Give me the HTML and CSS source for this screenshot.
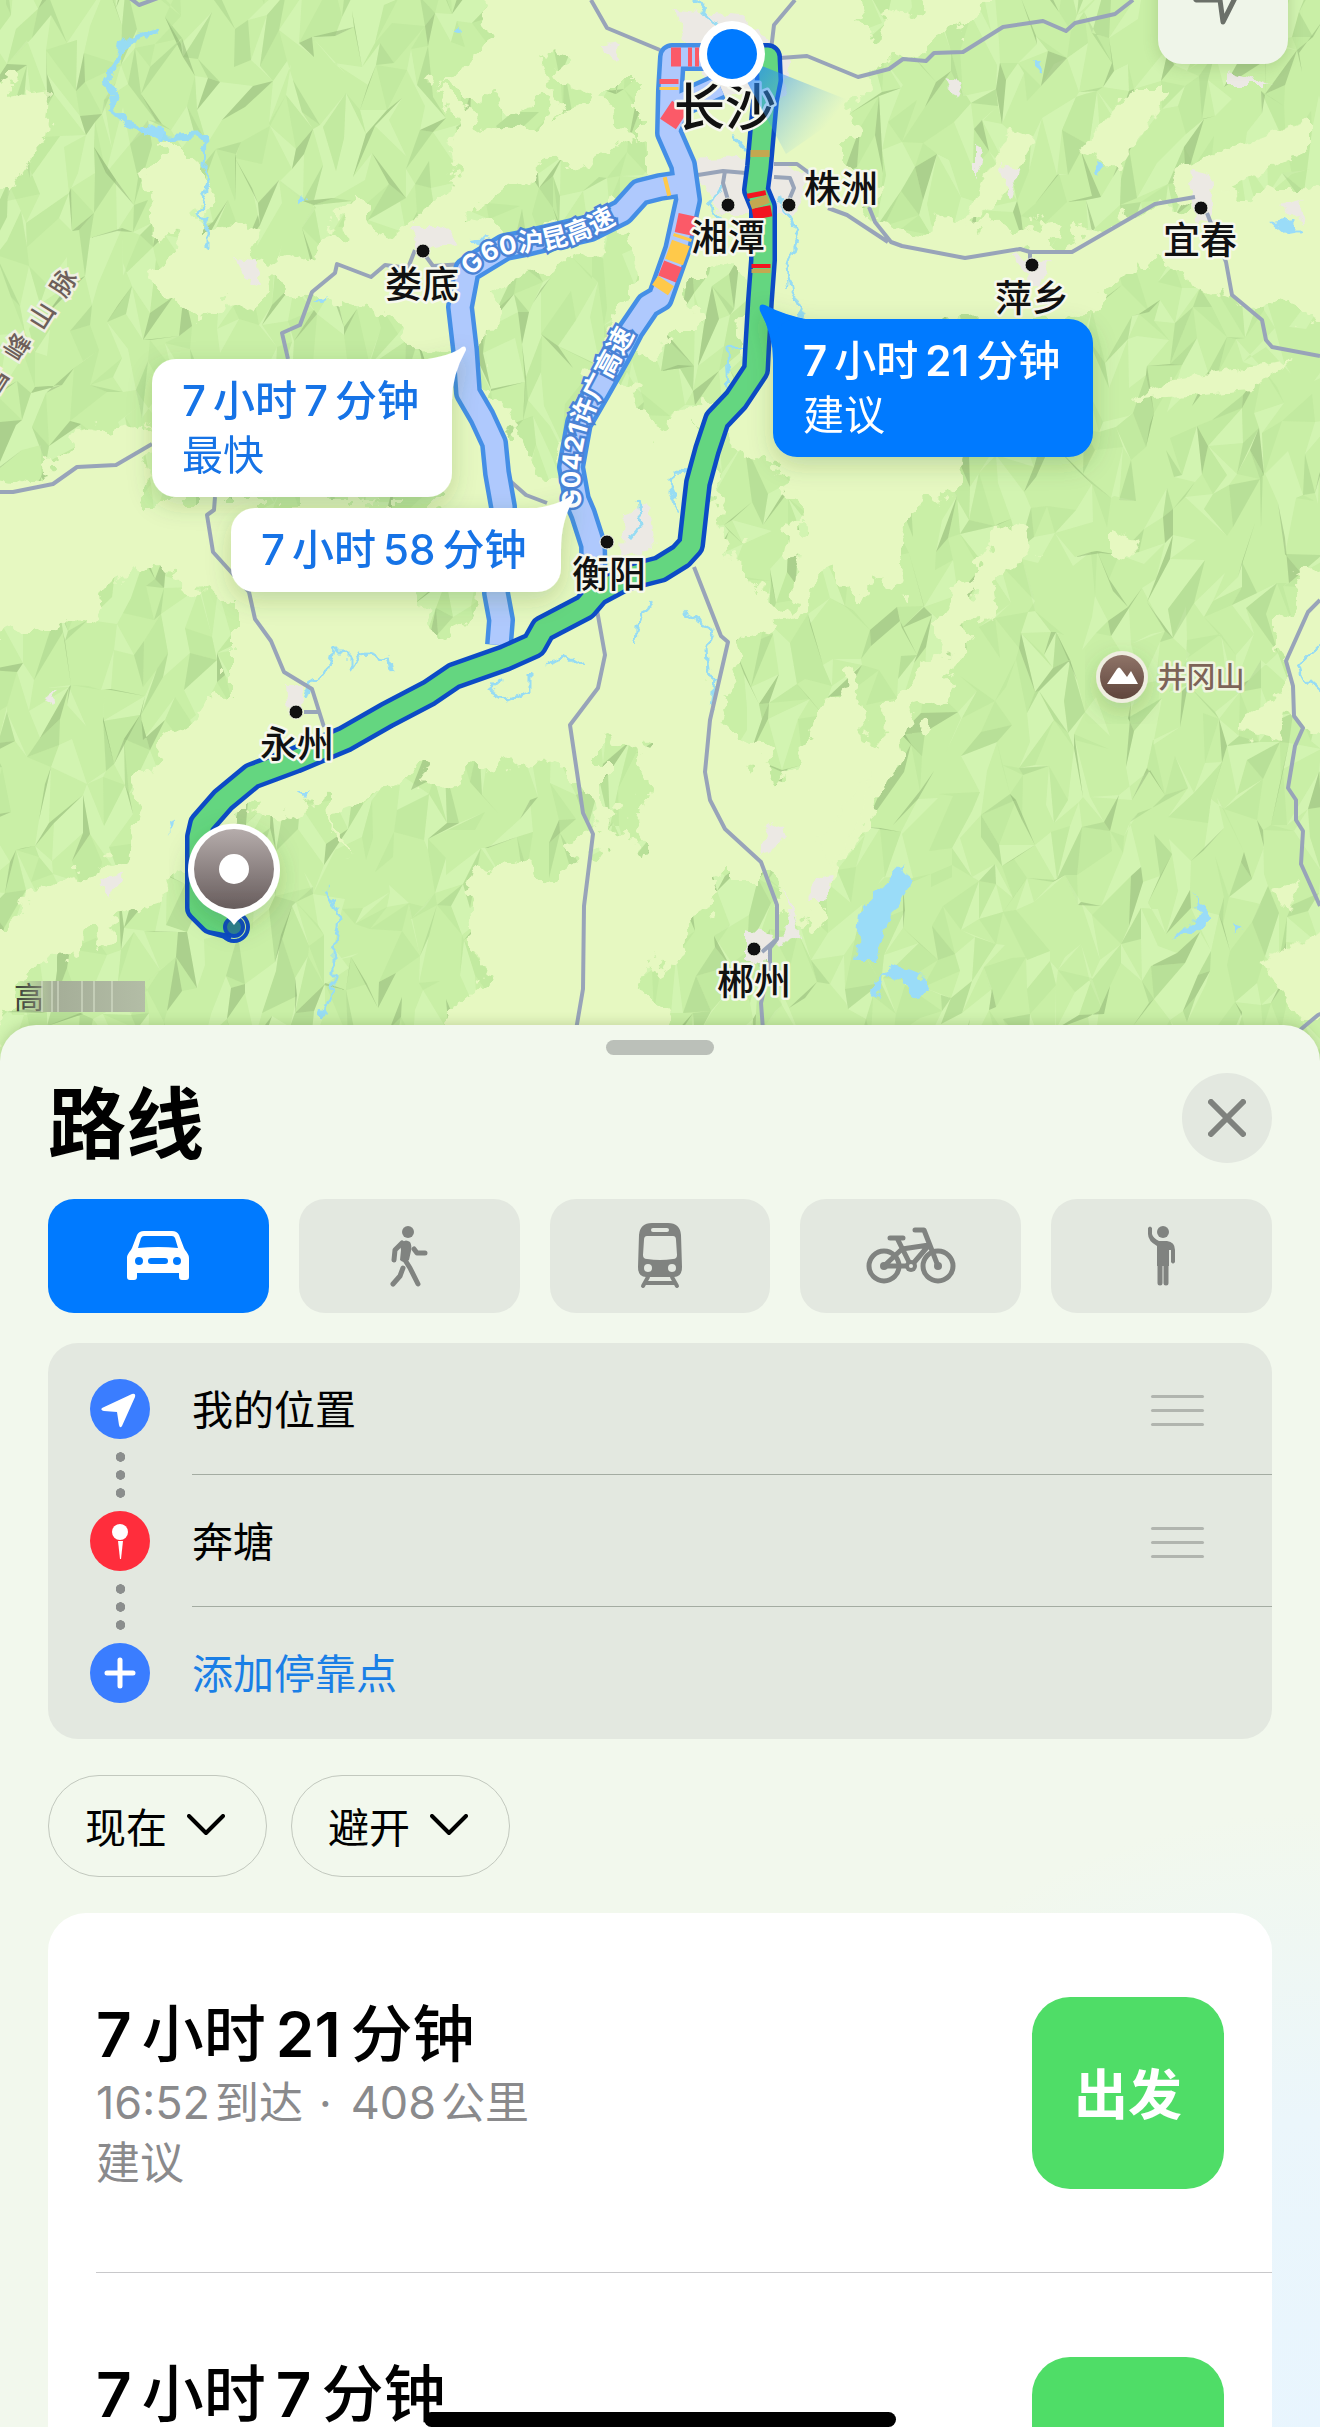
FILE: index.html
```html
<!DOCTYPE html>
<html lang="zh-CN">
<head>
<meta charset="utf-8">
<meta name="viewport" content="width=device-width, initial-scale=1">
<title>路线</title>
<link rel="stylesheet" href="styles.css">
</head>
<body>
<div class="app">
  <section class="map" aria-label="地图">
    <svg class="map-canvas" viewBox="0 0 1320 1065">
      <defs>
        <filter id="coast" x="-40" y="-40" width="1400" height="1145" filterUnits="userSpaceOnUse" color-interpolation-filters="sRGB">
          <feTurbulence type="fractalNoise" baseFrequency="0.03" numOctaves="4" seed="4" result="edge"/>
          <feDisplacementMap in="SourceGraphic" in2="edge" scale="64" xChannelSelector="R" yChannelSelector="G"/>
        </filter>
        <filter id="rough" x="0" y="0" width="1320" height="1065" filterUnits="userSpaceOnUse">
          <feTurbulence type="fractalNoise" baseFrequency="0.09" numOctaves="2" seed="7" result="edge"/>
          <feDisplacementMap in="SourceGraphic" in2="edge" scale="14" xChannelSelector="R" yChannelSelector="G"/>
        </filter>
        <filter id="shadow" x="-20%" y="-20%" width="140%" height="160%">
          <feDropShadow dx="0" dy="8" stdDeviation="12" flood-color="#3a5a20" flood-opacity="0.22"/>
        </filter>
        <linearGradient id="pinFill" x1="0" y1="0" x2="0" y2="1"><stop offset="0" stop-color="#b5acab"/><stop offset="1" stop-color="#675c5c"/></linearGradient>
        <linearGradient id="peakFill" x1="0" y1="0" x2="0" y2="1"><stop offset="0" stop-color="#8f7468"/><stop offset="1" stop-color="#5f453c"/></linearGradient>
        <linearGradient id="beam" gradientUnits="userSpaceOnUse" x1="745" y1="66" x2="825" y2="128"><stop offset="0" stop-color="#1a7fff" stop-opacity="0.75"/><stop offset="1" stop-color="#62b8e8" stop-opacity="0"/></linearGradient>
        <linearGradient id="smear"><stop offset="0" stop-color="#8d9480" stop-opacity="0"/><stop offset="0.3" stop-color="#a5ae98"/><stop offset="1" stop-color="#b3bda6"/></linearGradient>
        <path id="g60" d="M472 277 C486 258 508 252 536 251 Q586 244 628 215 L664 196"/>
        <path id="g0421" d="M582 508 C574 440 594 410 614 372 L650 305"/>
        <mask id="woods" maskUnits="userSpaceOnUse" x="0" y="0" width="1320" height="1065">
          <g filter="url(#coast)" fill="#fff">
            <path d="M-40 -40H500L480 50 440 95 460 160 430 215 390 235 350 190 330 240 270 270 240 210 205 240 200 150 150 150 165 230 160 290 195 330 170 380 140 420 80 430 40 480 -40 470V180L30 150 45 100-40 90Z"/>
            <path d="M430 90 550 105 540 130 480 120ZM480 195 610 150 650 135V190L610 215 530 235 470 215ZM540 60 590 80 560 120ZM600 90 640 90 640 140 610 120Z"/>
            <path d="M190 320 270 290 380 310 440 350V500H150L140 430Z"/>
            <path d="M490 290 630 235 640 265 590 370 555 490 515 440 485 380Z"/>
            <path d="M620 370 680 330 730 330 720 390 660 430ZM690 290 740 260 745 400 700 400Z"/>
            <path d="M850 -40H940L900 20 860 30ZM860 90 900 50 960 30 1010-40H1400V170L1250 190 1160 210 1070 240 1010 220 940 230 890 220 850 170Z"/>
            <path d="M940 330 1050 320 1110 300 1150 260 1240 300 1400 360V560L1300 570 1280 640 1270 720 1400 730V1120H700L650 1000 720 880 770 880 800 930 860 840 900 760 940 700 960 640 1030 550 1000 520 960 600 900 690 860 740 850 660 830 690 800 770 750 760 720 700 750 640 800 620 830 560 850 600 900 590 910 530 960 470Z"/>
            <path d="M700 430 790 470 800 530 790 620 760 590 720 530Z"/>
            <path d="M340 810 420 780 480 760 560 770 600 830 570 870 500 860 470 880 480 940 430 1120H350L330 930Z"/>
            <path d="M-40 640 80 620 140 560 230 600 230 700 170 720 140 790 120 860 40 890-40 960Z"/>
            <path d="M240 820 330 800 340 880 400 960 330 1120H-40L20 980 130 920 200 870Z"/>
            <path d="M380 500 480 530 480 600 440 640 400 580ZM600 740 650 760 640 850 600 800ZM1080 600 1220 560 1240 700 1130 740Z"/>
          </g>
        </mask>
      </defs>

      <rect width="1320" height="1065" fill="#e6f8c1"/>

      <!-- wooded hills, with facets drawn by terrain.js -->
      <g mask="url(#woods)">
        <rect width="1320" height="1065" fill="#c9efa6"/>
        <g id="facets"></g>
      </g>
      <!-- valleys crossing the eastern hills -->
      <g filter="url(#rough)" fill="#e6f8c1">
        <path d="M-10 100 50 90 45 140 10 190H-10ZM960 230 975 200 1010 130 1035 140 1000 200ZM1080 150 1130 90 1170 90 1120 170ZM1170 170 1310 120V150L1180 210ZM1130 400 1170 380 1290 360 1250 390ZM1110 530 1140 540 1130 560 1110 555ZM1240 720 1290 690 1280 740 1240 730ZM1270 890 1300 880 1290 910ZM820 840 870 770 860 820 830 870ZM1260 960 1330 930V1020H1300Z"/>
      </g>
      <!-- built-up areas -->
      <g filter="url(#rough)" fill="#ece9e4">
        <path d="M675 10 740 15 790 60 785 100 720 95 690 50ZM410 225 440 225 460 245 420 250ZM235 258 255 260 262 285 245 278ZM1000 165 1020 170 1010 200ZM975 145 985 148 975 180ZM945 78 962 82 955 98ZM600 45 620 42 615 62ZM285 685 305 685 300 720 288 710ZM625 515 650 505 655 550 620 555ZM690 160 770 155 810 180 795 215 720 215ZM1010 255 1050 260 1040 290ZM1190 170 1210 175 1215 225 1195 220ZM745 930 775 935 765 965 745 960ZM815 880 835 875 825 900 808 900ZM770 820 785 830 775 850 760 855ZM785 885 790 925 775 945 800 935ZM1270 85 1225 70 1225 85ZM1280 205 1300 200 1305 225ZM190 460 215 470 195 475ZM45 700 60 690 50 705ZM100 880 125 870 110 900Z"/>
      </g>

      <g class="water" filter="url(#rough)">
        <path class="river river-wide" d="M158 30 122 44 115 68 105 80 115 92 110 108 130 124 148 132 170 137 205 135"/>
        <path class="river" d="M205 135 204 168 209 182 199 215 208 232 208 246M692-5 718 27M733 135 750 155M776 195 790 217 797 238 787 267 792 293 805 317M748 347 727 350 729 393M689 473 672 472 670 490 679 512M306 700 312 681 328 671 333 650 350 650 350 671 362 653 379 659 388 657 391 671M530 671 530 691 508 700 489 690 504 678M544 664 568 657 585 667M638 500 641 526 630 540M651 598 637 629 636 643M686 612 713 629 706 647 708 671 715 681 712 709M326 888 340 919 334 950 334 984 320 1018M1324 640 1298 664 1301 674 1324 695M725 180 710 205 722 222"/>
        <path class="lake" d="M902 865 912 882 888 925 875 962 855 962 860 915 880 889ZM890 965 908 970 920 975 930 993 912 998 902 980 885 975 877 998 872 990ZM1194 891 1210 918 1192 934 1172 938 1185 926 1200 915ZM140 124 165 128 165 140 145 138ZM1270 222 1290 220 1302 232 1285 235ZM468 238 490 236 480 247ZM315 302 330 295 322 306ZM298 195 306 198 300 206ZM1095 162 1106 165 1098 175ZM1035 60 1045 62 1040 70ZM1232 925 1245 928 1235 934ZM168 818 174 820 170 835ZM298 790 308 790 302 796ZM454 30 460 28 458 36Z"/>
      </g>

      <g class="road">
        <path d="M780 58 807 56 858 77 889 69 903 59 926 61 934 53 963 52 1003 27 1043 21 1066 31 1075 23 1115 14 1133 0M795 0 774 25 771 50M591 0 607 28 660 50M130-2 139 5 158-2"/>
        <path d="M463 264 433 266 425 255M415 250 408 268 385 265 371 277 337 264 335 273 312 292 300 325 282 333 288 359M0 492H13L53 484 77 467 116 465 152 444M215 497 214 510 207 515 213 552 231 572 249 592 255 619 271 641 284 672 312 689 324 727M304 712H320M509 480 526 495 547 503"/>
        <path d="M597 610 605 655 598 688 570 725 583 813 593 834 584 906 583 989 576 1030M694 567 721 636 728 642 710 720 705 772 710 800 725 829 761 862 777 905V939L770 948V965L761 1003 763 1030M777 939 762 952"/>
        <path d="M1320 600 1308 612 1286 661 1293 686 1294 716 1303 728 1295 746 1288 788 1296 800V820L1303 831 1301 864 1320 906M1330 1010 1318 1015 1300 1030"/>
        <path d="M698 175 723 171 746 173M725 171 723 183 728 200M774 164H797L812 175M774 177 790 178 794 188 789 200M828 208 847 215 888 242M869 207 875 222 891 242 902 246 965 258 1020 249 1030 252H1072L1155 204 1195 197M1030 252V262M1207 213 1226 262 1232 295 1262 320 1266 340 1272 347 1320 356"/>
      </g>

      <!-- alternative routes -->
      <g class="alt-line">
        <path id="fast" d="M687 183 660 187 640 192 622 212 590 228 526 243 505 247 467 270 460 307 465 350 468 393 482 417 494 443 497 473 503 507 496 593 501 620 499 645"/>
        <path id="slow" d="M732 57H672L670 90 669 133 683 165 688 200 677 250 660 298 648 305 631 330 619 353 598 390 579 423 571 467 577 500 583 514 593 545 594 595"/>
        <path id="ramp" d="M669 128 682 103 720 86"/>
      </g>
      <g class="alt-fill"><use href="#fast"/><use href="#slow"/><use href="#ramp"/></g>
      <g class="traffic">
        <path class="red" d="M671 57H681M688 57H692M695 57H699M669 79V84M680 106 668 124M688 215 684 234M673 264 667 279"/>
        <path class="yellow" d="M669 87V90M683 236 682 239M681 243 674 262M666 281 660 290M665 187 669 186"/>
      </g>

      <!-- suggested route -->
      <g class="main-edge"><path d="M732 57H768L769 80 765 100 762 133 759 167 756 190 763 207 763 260 760 300 757 350 756 370 736 400 717 420 707 450 698 483 696 500 691 545 681 556 660 569 625 578 597 593 585 607 543 629 534 645 505 658 454 676 429 693 387 715 345 739 295 760 252 776 223 800 202 824 199 837V908L212 921 234 927"/><circle cx="234" cy="927" r="2"/></g>
      <path class="main-fill" d="M732 57H768L769 80 765 100 762 133 759 167 756 190 763 207 763 260 760 300 757 350 756 370 736 400 717 420 707 450 698 483 696 500 691 545 681 556 660 569 625 578 597 593 585 607 543 629 534 645 505 658 454 676 429 693 387 715 345 739 295 760 252 776 223 800 202 824 199 837V908L212 921 228 924"/>
      <g class="traffic traffic-main">
        <path class="red" d="M756 192 757 197M761 207 763 218M761 264V268"/>
        <path class="orange" d="M758 198 761 206M760 150V157M761 269V273"/>
      </g>

      <g class="road-name">
        <text><textPath href="#g60">G60沪昆高速</textPath></text>
        <text><textPath href="#g0421">G0421许广高速</textPath></text>
      </g>

      <g class="dot">
        <circle cx="423" cy="251" r="7"/><circle cx="728" cy="205" r="7"/><circle cx="789" cy="205" r="7"/><circle cx="1032" cy="265" r="7"/><circle cx="1201" cy="208" r="7"/><circle cx="607" cy="542" r="7"/><circle cx="296" cy="712" r="7"/><circle cx="754" cy="949" r="7"/>
      </g>
      <g class="city">
        <text class="capital" x="725" y="126">长沙</text>
        <text x="422" y="298">娄底</text><text x="841" y="202">株洲</text><text x="728" y="251">湘潭</text><text x="1032" y="312">萍乡</text><text x="1200" y="254">宜春</text><text x="609" y="588">衡阳</text><text x="297" y="758">永州</text><text x="754" y="995">郴州</text>
      </g>
      <path fill="url(#beam)" d="M732 54 858 104 786 154Z"/>
      <g class="range">
        <text transform="translate(64 283) rotate(-58)" y="9">脉</text><text transform="translate(42 316) rotate(-58)" y="9">山</text><text transform="translate(18 347) rotate(-58)" y="9">峰</text><text transform="translate(-4 380) rotate(-58)" y="9">雪</text>
      </g>
      <g class="peak" filter="url(#shadow)">
        <circle cx="1122" cy="677" r="26" fill="#efeee0"/><circle cx="1122" cy="677" r="22" fill="url(#peakFill)"/>
        <path fill="#fff" d="M1107 684 1117 669Q1119 666 1121 669L1127 677 1131 671 1138 684Z"/>
      </g>
      <text class="peak-name" x="1201" y="688">井冈山</text>

      <circle cx="732" cy="54" r="33" fill="#fff"/><circle cx="732" cy="54" r="25" fill="#007aff"/>
      <circle cx="234" cy="927" r="9" fill="#2b7f96" stroke="#0b49c4" stroke-width="4"/>
      <g filter="url(#shadow)">
        <path fill="#fff" d="M234 925 Q228 916 216 912 A46 46 0 1 1 252 912 Q240 916 234 925Z"/>
        <circle cx="234" cy="869" r="40" fill="url(#pinFill)"/><circle cx="234" cy="869" r="15" fill="#fff"/>
      </g>

      <g class="legal">
        <text x="14" y="1008">高</text>
        <rect x="18" y="981" width="127" height="31" fill="url(#smear)"/>
        <path d="M42 981v31M52 981v31M58 981v31M82 981v31M94 981v31M112 981v31"/>
      </g>

      <g filter="url(#shadow)">
        <path fill="#fff" d="M420 360Q452 356 462 347Q466 345 466 350Q452 375 452 400Z"/>
        <foreignObject x="152" y="359" width="300" height="138"><button class="callout" type="button"><strong><span class="num">7</span>小时<span class="num">7</span>分钟</strong><span>最快</span></button></foreignObject>
      </g>
      <g filter="url(#shadow)">
        <path fill="#fff" d="M530 509Q560 505 570 496Q574 494 574 499Q561 520 561 550Z"/>
        <foreignObject x="231" y="508" width="330" height="84"><button class="callout" type="button"><strong><span class="num">7</span>小时<span class="num">58</span>分钟</strong></button></foreignObject>
      </g>
      <g filter="url(#shadow)">
        <path fill="#007aff" d="M810 320Q784 315 765 305Q758 303 760 311Q773 335 773 360Z"/>
        <foreignObject x="773" y="319" width="320" height="138"><button class="callout callout-active" type="button"><strong><span class="num">7</span>小时<span class="num">21</span>分钟</strong><span>建议</span></button></foreignObject>
      </g>
    </svg>
    <button class="locate" type="button" aria-label="定位">
      <svg viewBox="0 0 130 130" width="130" height="130"><path d="M94 30 38 66H62L65 88Z"/></svg>
    </button>
  </section>

  <main class="sheet">
    <div class="grabber"></div>
    <header class="sheet-head">
      <h1>路线</h1>
      <button class="close" type="button" aria-label="关闭"><svg viewBox="0 0 38 38" width="38" height="38"><path d="M3 3 35 35M35 3 3 35"/></svg></button>
    </header>

    <nav class="modes" aria-label="出行方式">
      <button class="mode mode-active" type="button" aria-label="驾车">
        <svg viewBox="0 0 62 50" width="62" height="50"><path fill-rule="evenodd" d="M0 27C0 23 3 21 5 17L10 4Q12 0 17 0H45Q50 0 52 4L57 17C59 21 62 23 62 27V46Q62 49 59 49H55Q52 49 52 46V42H10V46Q10 49 7 49H3Q0 49 0 46ZM11 17Q31 15 51 17L48 7Q47 5 45 5H17Q15 5 14 7ZM8 30a4 4 0 1 0 8 0a4 4 0 1 0-8 0M46 30a4 4 0 1 0 8 0a4 4 0 1 0-8 0M24 27a3 3 0 0 0 0 6H38a3 3 0 0 0 0-6Z"/></svg>
      </button>
      <button class="mode" type="button" aria-label="步行">
        <svg viewBox="0 0 38 61" width="38" height="61"><circle cx="18" cy="6" r="6"/><path d="M10 18Q15 12 20 16Q22 19 21 25L19 34Q14 38 10 34L11 24Z"/><path class="line" d="M12 17 5 24 4 34M24 23 27 27H35M15 34 20 42 28 58M13 42 10 50 3 58"/></svg>
      </button>
      <button class="mode" type="button" aria-label="公共交通">
        <svg viewBox="0 0 44 66" width="44" height="66"><path fill-rule="evenodd" d="M1 12Q2 0 14 0H30Q42 0 43 12L44 44Q44 54 36 54H8Q0 54 0 44ZM15 5a2 2 0 0 0 0 4H29a2 2 0 0 0 0-4ZM9 13Q6 13 6 17L5 32Q5 36 9 36Q22 38 35 36Q39 36 39 32L38 17Q38 13 35 13ZM6 45a4 4 0 1 0 8 0a4 4 0 1 0-8 0M30 45a4 4 0 1 0 8 0a4 4 0 1 0-8 0"/><path class="line thin" d="M10 54 5 63M34 54 39 63M8 60H36"/></svg>
      </button>
      <button class="mode" type="button" aria-label="骑行">
        <svg viewBox="0 0 90 58" width="90" height="58"><g class="line"><circle cx="18" cy="39" r="15"/><circle cx="72" cy="39" r="15"/><path d="M49 3H58L72 39M24 11H37M31 11 45 39M36 22 63 18 45 39H18Z"/></g><circle cx="18" cy="39" r="4"/><circle cx="72" cy="39" r="4"/><circle cx="45" cy="39" r="6"/><circle cx="45" cy="39" r="2" fill="#e4e9e1"/></svg>
      </button>
      <button class="mode" type="button" aria-label="打车">
        <svg viewBox="0 0 29 60" width="29" height="60"><circle cx="16" cy="6" r="6"/><path d="M10 15H20Q28 16 28 24V36Q26 39 24 36V24H22V40H10V20Q1 15 1 8V2Q3-1 5 2V8Q6 12 12 15Z"/><path class="line" d="M13 38V57M19 38V57"/></svg>
      </button>
    </nav>

    <ul class="stops">
      <li class="stop">
        <span class="badge"><svg viewBox="0 0 60 60" width="60" height="60"><path d="M12 29 42 15Q46 14 45 18L32 47Q30 50 29 46L27 33 14 32Q10 31 12 29Z"/></svg></span>
        <div class="stop-body"><span>我的位置</span><button class="drag" type="button" aria-label="拖动排序"><i></i><i></i><i></i></button></div>
      </li>
      <li class="stop">
        <span class="badge badge-red"><svg viewBox="0 0 60 60" width="60" height="60"><circle cx="30" cy="21" r="8"/><path d="M28 30H33L31 48H30Z"/></svg></span>
        <div class="stop-body"><span>奔塘</span><button class="drag" type="button" aria-label="拖动排序"><i></i><i></i><i></i></button></div>
      </li>
      <li class="stop">
        <span class="badge"><svg viewBox="0 0 60 60" width="60" height="60"><path class="plus" d="M30 17V43M17 30H43"/></svg></span>
        <div class="stop-body"><a href="#">添加停靠点</a></div>
      </li>
    </ul>

    <div class="filters">
      <button class="chip" type="button">现在<svg viewBox="0 0 38 22" width="38" height="22"><path d="M2 2 19 19 36 2"/></svg></button>
      <button class="chip" type="button">避开<svg viewBox="0 0 38 22" width="38" height="22"><path d="M2 2 19 19 36 2"/></svg></button>
    </div>

    <section class="results">
      <article class="result">
        <div class="result-text">
          <h2><span class="num">7</span>小时<span class="num">21</span>分钟</h2>
          <p><span class="num">16:52</span>到达<span class="sep">·</span><span class="num">408</span>公里</p>
          <p>建议</p>
        </div>
        <button class="go" type="button">出发</button>
      </article>
      <article class="result">
        <div class="result-text"><h2><span class="num">7</span>小时<span class="num">7</span>分钟</h2></div>
        <button class="go" type="button">出发</button>
      </article>
    </section>
  </main>
  <div class="home-bar"></div>
</div>
<script src="terrain.js"></script>
</body>
</html>
```
FILE: terrain.js
```js
// Low-poly hill shading: a jittered grid of slopes, grouped by shade.
(function () {
  var seed = 91;
  function rnd() {
    seed = (seed * 16807) % 2147483647;
    return seed / 2147483647;
  }
  var stepX = 19, stepY = 27, cols = 72, rows = 42;
  var pts = [];
  for (var r = 0; r < rows; r++) {
    pts.push([]);
    for (var c = 0; c < cols; c++) {
      pts[r].push([
        Math.round((c - 1) * stepX + (rnd() - 0.5) * 24),
        Math.round((r - 1) * stepY + (rnd() - 0.5) * 34),
        rnd()
      ]);
    }
  }
  var shades = {
    light: { fill: '#d9f6b9', opacity: 0.6, d: '' },
    soft: { fill: '#b4dd93', opacity: 0.3, d: '' },
    mid: { fill: '#a3cb85', opacity: 0.42, d: '' },
    dark: { fill: '#8db273', opacity: 0.5, d: '' }
  };
  function tri(a, b, c) {
    var dx1 = b[0] - a[0], dy1 = b[1] - a[1], dx2 = c[0] - a[0], dy2 = c[1] - a[1];
    var det = dx1 * dy2 - dx2 * dy1 || 1;
    var gx = ((b[2] - a[2]) * dy2 - (c[2] - a[2]) * dy1) / det;
    var gy = ((c[2] - a[2]) * dx1 - (b[2] - a[2]) * dx2) / det;
    var s = (gx + gy * 0.6) * 40;
    var key = s > 1.9 ? 'dark' : s > 1.15 ? 'mid' : s > 0.5 ? 'soft' : s < -0.7 ? 'light' : '';
    if (key) shades[key].d += 'M' + a[0] + ' ' + a[1] + 'L' + b[0] + ' ' + b[1] + 'L' + c[0] + ' ' + c[1] + 'Z';
  }
  for (r = 0; r < rows - 1; r++) {
    for (c = 0; c < cols - 1; c++) {
      var p = pts[r][c], q = pts[r][c + 1], s = pts[r + 1][c], t = pts[r + 1][c + 1];
      if (rnd() > 0.5) { tri(p, q, s); tri(q, t, s); } else { tri(p, q, t); tri(p, t, s); }
    }
  }
  var g = document.getElementById('facets');
  Object.keys(shades).forEach(function (k) {
    var path = document.createElementNS('http://www.w3.org/2000/svg', 'path');
    path.setAttribute('d', shades[k].d);
    path.setAttribute('fill', shades[k].fill);
    path.setAttribute('fill-opacity', shades[k].opacity);
    g.appendChild(path);
  });
})();
```
FILE: styles.css
```css
* { box-sizing: border-box; }
body, h1, h2, p, ul { margin: 0; padding: 0; }
body { font-family: Inter, "Noto Sans CJK SC", sans-serif; color: #000; background: #f2f8ed; }
button { font: inherit; border: 0; padding: 0; color: inherit; background: none; cursor: pointer; }
svg { display: block; }

.app { position: relative; display: flex; flex-direction: column; height: 100vh; overflow: hidden; }

/* map */
.map { position: relative; flex: none; }
.map-canvas { width: 100%; height: auto; }
.river { fill: none; stroke: #97dcf3; stroke-width: 3; stroke-linejoin: round; }
.river-wide { stroke-width: 6; }
.lake { fill: #9adcf8; }
.road path { fill: none; stroke: #98a4b9; stroke-width: 4; stroke-linejoin: round; }
.alt-line { fill: none; stroke: #458fe6; stroke-width: 28; stroke-linejoin: round; }
.alt-fill { fill: none; stroke: #afc9fd; stroke-width: 19; stroke-linejoin: round; }
.main-edge { fill: none; stroke: #0c4bc6; stroke-width: 28; stroke-linejoin: round; }
.main-fill { fill: none; stroke: #64d680; stroke-width: 19; stroke-linejoin: round; }
.traffic path { fill: none; stroke-width: 19; }
.traffic .red { stroke: #fb5a68; }
.traffic-main .red { stroke: #f31420; }
.traffic .yellow { stroke: #ffc94a; }
.traffic .orange { stroke: #c3a850; }
.road-name text { font-size: 26px; font-weight: 700; fill: #fff; stroke: #4a83d6; stroke-width: 5px; paint-order: stroke; }
.dot circle { fill: #111; stroke: #f4f6ea; stroke-width: 1px; }
.city text { font-size: 37px; font-weight: 500; text-anchor: middle; fill: #111; stroke: #f6f8ee; stroke-width: 5px; stroke-linejoin: round; paint-order: stroke; }
.city .capital { font-size: 51px; }
.range text { font-size: 26px; font-weight: 500; text-anchor: middle; fill: #6e5f5a; stroke: #f0f0e2; stroke-width: 5px; paint-order: stroke; }
.peak-name { font-size: 29px; font-weight: 500; text-anchor: middle; fill: #7d6458; stroke: #eff5df; stroke-width: 5px; stroke-linejoin: round; paint-order: stroke; }
.legal text { font-size: 30px; fill: #3f443a; }
.legal path { stroke: #dde6d0; stroke-width: 1; }

.callout { display: flex; flex-direction: column; justify-content: center; width: 100%; height: 100%; padding: 0 30px; border-radius: 24px; background: #fff; color: #1673e6; font-size: 41px; line-height: 54px; text-align: left; }
.callout strong { font-size: 42px; font-weight: 500; white-space: nowrap; }
.callout-active { background: #007aff; color: #fff; }
.callout-active .num { font-weight: 600; }
.num { margin-right: 7px; }
.num:not(:first-child) { margin-left: 7px; }

.locate { position: absolute; top: -66px; right: 32px; width: 130px; height: 130px; border-radius: 24px; background: #eff5e9; box-shadow: 0 2px 16px rgba(60, 90, 30, .2); }
.locate path { fill: none; stroke: #6b7069; stroke-width: 5; stroke-linejoin: round; }

/* bottom sheet */
.sheet { position: relative; flex: 1; min-height: 0; display: flex; flex-direction: column; margin-top: -40px; padding: 15px 48px 0; border-radius: 36px 36px 0 0; overflow: hidden; background: radial-gradient(circle at 100% 100%, #e8f5fe 0, #ebf6fb 16%, rgba(242, 248, 240, 0) 32%), #f2f8ed; box-shadow: 0 -2px 12px rgba(60, 90, 30, .2); }
.grabber { flex: none; align-self: center; width: 108px; height: 15px; border-radius: 8px; background: #bbc0b9; }
.sheet-head { flex: none; display: flex; align-items: center; justify-content: space-between; height: 144px; padding-bottom: 18px; }
h1 { font-size: 78px; line-height: 100px; font-weight: 700; margin-top: 14px; }
.close { display: grid; place-items: center; width: 90px; height: 90px; border-radius: 50%; background: #e3e8e0; }
.close path { fill: none; stroke: #7f827e; stroke-width: 6; stroke-linecap: round; }

.modes { flex: none; display: grid; grid-template-columns: repeat(5, 1fr); gap: 30px; }
.mode { display: grid; place-items: center; height: 114px; border-radius: 26px; background: #e3e8e0; fill: #808380; }
.mode-active { background: #007aff; fill: #fff; }
.mode .line { fill: none; stroke: #808380; stroke-width: 5; stroke-linecap: round; stroke-linejoin: round; }
.mode .thin { stroke-width: 4; }

.stops { flex: none; margin-top: 30px; border-radius: 30px; background: #e3e8e0; list-style: none; }
.stop { position: relative; display: flex; align-items: center; gap: 42px; height: 132px; padding-left: 42px; }
.stop:not(:last-child)::after { content: ""; position: absolute; left: 68px; top: 105px; width: 9px; height: 54px; background: radial-gradient(circle 5px at center, #8b8e8d 90%, transparent) 0 0 / 9px 18px; }
.badge { flex: none; width: 60px; height: 60px; border-radius: 50%; background: #3a7dff; fill: #fff; }
.badge-red { background: #ff2d3c; }
.plus { stroke: #fff; stroke-width: 5; stroke-linecap: round; }
.stop-body { flex: 1; display: flex; align-items: center; justify-content: space-between; height: 132px; padding-right: 68px; border-bottom: 1px solid #a4aca2; font-size: 41px; }
.stop:last-child .stop-body { border-bottom: 0; }
.stop-body span, .stop-body a { padding-bottom: 4px; }
.stop a { color: #1a7fe6; text-decoration: none; }
.drag { display: grid; gap: 11px; width: 53px; padding-top: 3px; }
.drag i { height: 3px; border-radius: 2px; background: #b1b5af; }

.filters { flex: none; display: flex; gap: 24px; margin-top: 36px; }
.chip { display: flex; align-items: center; gap: 20px; width: 219px; height: 102px; padding: 0 0 2px 36px; border: 1px solid #c2c8be; border-radius: 51px; font-size: 41px; }
.chip path { fill: none; stroke: #000; stroke-width: 4; stroke-linecap: round; stroke-linejoin: round; }

.results { flex: none; margin-top: 36px; border-radius: 38px; background: #fff; }
.result { display: flex; align-items: flex-start; justify-content: space-between; height: 360px; margin-left: 48px; padding: 84px 48px 0 0; border-bottom: 1px solid #c8c8ca; }
h2 { font-size: 62px; line-height: 76px; font-weight: 500; }
.result p { font-size: 44px; line-height: 60px; color: #8a8a8c; }
.result p .num { margin-right: 5px; font-size: 45px; }
.sep { margin: 0 12px 0 16px; }
h2 .num { margin-right: 10px; font-weight: 600; }
h2 .num:not(:first-child) { margin-left: 10px; }
.go { width: 192px; height: 192px; padding-bottom: 4px; border-radius: 38px; background: #4fdd67; color: #fff; font-size: 54px; font-weight: 700; }

.home-bar { position: absolute; bottom: 0; left: 50%; width: 472px; height: 15px; margin-left: -236px; border-radius: 8px; background: #000; }
```
